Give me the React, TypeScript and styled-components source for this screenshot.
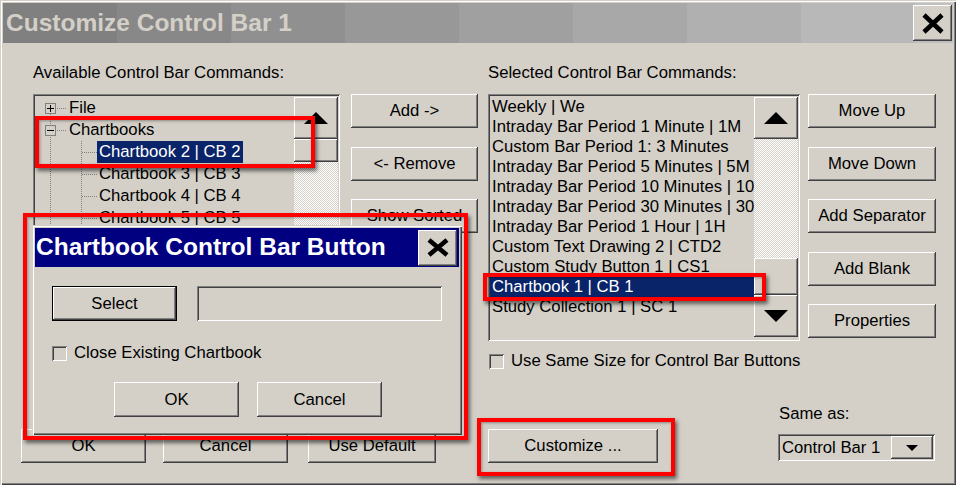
import React from "react";
import styled, { createGlobalStyle, css } from "styled-components";

const GlobalStyle = createGlobalStyle`
  html, body { margin: 0; padding: 0; background: #d4d0c8; }
  body {
    font-family: "Liberation Sans", Arial, sans-serif;
    font-size: 16.7px;
    color: #000;
    overflow: hidden;
  }
  * { box-sizing: border-box; }
`;

const FACE = "#d4d0c8";

const raised = css`
  box-shadow: inset -1px -1px #404040, inset 1px 1px #ffffff,
    inset -2px -2px #808080, inset 2px 2px ${FACE};
`;
const sunken = css`
  box-shadow: inset 1px 1px #808080, inset -1px -1px #ffffff,
    inset 2px 2px #404040, inset -2px -2px ${FACE};
`;
const frame = css`
  box-shadow: inset 1px 1px ${FACE}, inset 2px 2px #ffffff,
    inset -1px -1px #404040, inset -2px -2px #808080;
`;

const Window = styled.div`
  position: relative;
  width: 956px;
  height: 485px;
  padding: 3px 3px 0 3px;
  background: ${FACE};
  display: flex;
  flex-direction: column;
  ${frame}
`;

const TitleBar = styled.div<{ $active?: boolean }>`
  height: ${(p) => (p.$active ? 39 : 40)}px;
  flex: none;
  display: flex;
  align-items: center;
  justify-content: space-between;
  padding-left: ${(p) => (p.$active ? 1 : 3)}px;
  padding-right: ${(p) => (p.$active ? 2 : 1)}px;
  background: ${(p) =>
    p.$active
      ? "#000080"
      : `linear-gradient(to right,
        #808080 0 114px, #888888 114px 228px, #909090 228px 342px,
        #989898 342px 456px, #a0a0a0 456px 570px, #a8a8a8 570px 684px,
        #b0b0b0 684px 798px, #b8b8b8 798px 912px, #c0c0c0 912px)`};
`;

const TitleText = styled.span<{ $active?: boolean }>`
  font-weight: bold;
  font-size: 24.5px;
  line-height: 1;
  color: ${(p) => (p.$active ? "#ffffff" : FACE)};
  white-space: nowrap;
`;

const CloseButton = styled.button`
  width: 39px;
  height: 36px;
  padding: 0;
  border: none;
  background: ${FACE};
  display: flex;
  align-items: center;
  justify-content: center;
  ${raised}
`;

const Body = styled.div`
  flex: 1;
  display: flex;
  flex-direction: column;
  padding-top: 20px;
`;

const TopGrid = styled.div`
  display: grid;
  grid-template-columns: 318px 137px 320px 128px;
  grid-template-rows: 20px 258px auto;
  align-items: start;
  padding-left: 30px;
`;

const Label = styled.div<{ $col: string }>`
  grid-column: ${(p) => p.$col};
  grid-row: 1;
  line-height: 20px;
  white-space: nowrap;
`;

const TreeBox = styled.div`
  grid-column: 1;
  grid-row: 2 / span 2;
  margin-top: 11px;
  width: 307px;
  height: 300px;
  padding: 2px;
  display: flex;
  ${sunken}
`;

const TreeItems = styled.div`
  flex: 1;
  min-width: 0;
  overflow: hidden;
  padding-top: 1px;
`;

const TreeRow = styled.div`
  height: 22px;
  display: flex;
  align-items: stretch;
`;

const Guide = styled.div<{ $w: number; $x: number; $v: "none" | "full" | "down"; $h?: boolean }>`
  position: relative;
  flex: none;
  width: ${(p) => p.$w}px;
  &::before {
    content: "";
    display: ${(p) => (p.$v === "none" ? "none" : "block")};
    position: absolute;
    left: ${(p) => p.$x}px;
    top: ${(p) => (p.$v === "down" ? "11px" : "0")};
    bottom: 0;
    width: 1px;
    background-image: linear-gradient(to bottom, #808080 50%, transparent 50%);
    background-size: 1px 2px;
  }
  &::after {
    content: "";
    display: ${(p) => (p.$h ? "block" : "none")};
    position: absolute;
    left: ${(p) => p.$x + 1}px;
    right: 0;
    top: 11px;
    height: 1px;
    background-image: linear-gradient(to right, #808080 50%, transparent 50%);
    background-size: 2px 1px;
  }
`;

const Expander = styled.svg`
  position: absolute;
  left: 10px;
  top: 6px;
  z-index: 1;
`;

const ItemText = styled.span<{ $selected?: boolean }>`
  padding: 0 2px;
  line-height: 22px;
  white-space: nowrap;
  background: ${(p) => (p.$selected ? "#0a246a" : "transparent")};
  color: ${(p) => (p.$selected ? "#ffffff" : "#000")};
`;

const ScrollBar = styled.div<{ $pb?: number }>`
  flex: none;
  width: 44px;
  display: flex;
  flex-direction: column;
  padding: 1px 0 ${(p) => p.$pb ?? 0}px;
`;

const ScrollButton = styled.div`
  flex: none;
  height: 42px;
  background: ${FACE};
  display: flex;
  align-items: center;
  justify-content: center;
  ${raised}
`;

const Thumb = styled.div<{ $h: number }>`
  flex: none;
  height: ${(p) => p.$h}px;
  background: ${FACE};
  ${raised}
`;

const Track = styled.div`
  flex: 1;
  background-color: ${FACE};
  background-image: repeating-conic-gradient(#ffffff 0 25%, ${FACE} 0 50%);
  background-size: 2px 2px;
`;

const ButtonColumn = styled.div<{ $col: number }>`
  grid-column: ${(p) => p.$col};
  grid-row: 2;
  margin-top: 11px;
  display: flex;
  flex-direction: column;
  gap: 18.5px;
`;

const Button = styled.button<{ $w: number; $h?: number; $default?: boolean }>`
  width: ${(p) => p.$w}px;
  height: ${(p) => p.$h ?? 34}px;
  padding: 0;
  font: inherit;
  color: #000;
  background: ${FACE};
  white-space: nowrap;
  border: ${(p) => (p.$default ? "1px solid #000" : "none")};
  ${raised}
`;

const ListBox = styled.div`
  grid-column: 3;
  grid-row: 2;
  margin-top: 11px;
  width: 312px;
  height: 247px;
  padding: 2px;
  display: flex;
  ${sunken}
`;

const ListItems = styled.div`
  flex: 1;
  min-width: 0;
  overflow: hidden;
  padding-top: 1px;
`;

const ListRow = styled.div<{ $selected?: boolean }>`
  height: 20px;
  line-height: 20px;
  padding-left: 2px;
  white-space: nowrap;
  background: ${(p) => (p.$selected ? "#0a246a" : "transparent")};
  color: ${(p) => (p.$selected ? "#ffffff" : "#000")};
`;

const CheckRow = styled.label<{ $col?: string; $mt: number }>`
  ${(p) => (p.$col ? `grid-column: ${p.$col}; grid-row: 3;` : "")}
  align-self: start;
  margin-top: ${(p) => p.$mt}px;
  display: flex;
  align-items: center;
  gap: 7px;
  line-height: 20px;
  white-space: nowrap;
`;

const CheckBox = styled.span<{ $ml?: number }>`
  flex: none;
  width: 15px;
  height: 15px;
  margin-left: ${(p) => p.$ml ?? 0}px;
  background: ${FACE};
  ${sunken}
`;

const BottomBar = styled.div`
  margin-top: auto;
  margin-bottom: 22px;
  display: grid;
  grid-template-columns: 142px 145px 180px 290px 157px;
  align-items: end;
  padding-left: 18px;
`;

const SameAsGroup = styled.div`
  display: flex;
  flex-direction: column;
  margin-bottom: 2px;
`;

const SameAsLabel = styled.div`
  line-height: 20px;
  padding-left: 1px;
  margin-bottom: 10px;
`;

const Combo = styled.div`
  width: 157px;
  height: 27px;
  padding: 2px;
  display: flex;
  align-items: center;
  ${sunken}
`;

const ComboText = styled.span`
  flex: 1;
  padding-left: 2px;
  white-space: nowrap;
`;

const ComboButton = styled.div`
  width: 42px;
  height: 23px;
  background: ${FACE};
  display: flex;
  align-items: center;
  justify-content: center;
  ${raised}
`;

/* ---------- overlay dialog ---------- */

const Dialog = styled.div`
  position: absolute;
  left: 32px;
  top: 225px;
  width: 430px;
  height: 210px;
  padding: 3px;
  background: ${FACE};
  display: flex;
  flex-direction: column;
  z-index: 2;
  ${frame}
`;

const DialogContent = styled.div`
  display: flex;
  flex-direction: column;
  padding: 0 17px;
`;

const FieldRow = styled.div`
  margin-top: 19px;
  display: flex;
  gap: 20px;
`;

const TextField = styled.div`
  width: 245px;
  height: 35px;
  ${sunken}
`;

const DialogButtons = styled.div`
  margin-top: 19px;
  display: flex;
  justify-content: center;
  gap: 18px;
  padding-left: 2px;
`;

const Highlight = styled.div<{ $x: number; $y: number; $w: number; $h: number }>`
  position: absolute;
  left: ${(p) => p.$x}px;
  top: ${(p) => p.$y}px;
  width: ${(p) => p.$w}px;
  height: ${(p) => p.$h}px;
  border: 4px solid #ff0000;
  z-index: 3;
  pointer-events: none;
  box-shadow: 2px 3px 4px rgba(0, 0, 0, 0.55), inset 1px 1px 3px rgba(0, 0, 0, 0.35);
`;

/* ---------- icons ---------- */

const XIcon = ({ h = 21 }: { h?: number }) => (
  <svg width="22" height={h} viewBox={`0 0 22 ${h}`}>
    <path d={`M2 2 L20 ${h - 2} M20 2 L2 ${h - 2}`} stroke="#000" strokeWidth="4.6" />
  </svg>
);

const UpArrow = () => (
  <svg width="24" height="12" viewBox="0 0 24 12">
    <polygon points="12,0 24,12 0,12" fill="#000" />
  </svg>
);

const DownArrow = ({ w = 24, h = 12 }: { w?: number; h?: number }) => (
  <svg width={w} height={h} viewBox={`0 0 ${w} ${h}`}>
    <polygon points={`0,0 ${w},0 ${w / 2},${h}`} fill="#000" />
  </svg>
);

const ExpanderBox = ({ open }: { open: boolean }) => (
  <Expander width="11" height="11" viewBox="0 0 11 11" shapeRendering="crispEdges">
    <rect x="0.5" y="0.5" width="10" height="10" fill={FACE} stroke="#808080" />
    <path d="M2 5.5h7" stroke="#000" />
    {!open && <path d="M5.5 2v7" stroke="#000" />}
  </Expander>
);

/* ---------- data ---------- */

type TreeItem = {
  label: string;
  level: 0 | 1;
  expander?: "plus" | "minus";
  rootV?: "down" | "full";
  selected?: boolean;
};

const treeItems: TreeItem[] = [
  { label: "File", level: 0, expander: "plus", rootV: "down" },
  { label: "Chartbooks", level: 0, expander: "minus", rootV: "full" },
  { label: "Chartbook 2 | CB 2", level: 1, selected: true },
  { label: "Chartbook 3 | CB 3", level: 1 },
  { label: "Chartbook 4 | CB 4", level: 1 },
  { label: "Chartbook 5 | CB 5", level: 1 },
  { label: "Chartbook 6 | CB 6", level: 1 },
  { label: "Chartbook 7 | CB 7", level: 1 },
  { label: "Chartbook 8 | CB 8", level: 1 },
  { label: "Chartbook 9 | CB 9", level: 1 },
  { label: "Chartbook 10 | CB 10", level: 1 },
  { label: "Chartbook 11 | CB 11", level: 1 },
  { label: "Chartbook 12 | CB 12", level: 1 },
  { label: "Chartbook 13 | CB 13", level: 1 },
];

const listItems = [
  "Weekly | We",
  "Intraday Bar Period 1 Minute | 1M",
  "Custom Bar Period 1: 3 Minutes",
  "Intraday Bar Period 5 Minutes | 5M",
  "Intraday Bar Period 10 Minutes | 10M",
  "Intraday Bar Period 30 Minutes | 30M",
  "Intraday Bar Period 1 Hour | 1H",
  "Custom Text Drawing 2 | CTD2",
  "Custom Study Button 1 | CS1",
  "Chartbook 1 | CB 1",
  "Study Collection 1 | SC 1",
];

const rightButtons = ["Move Up", "Move Down", "Add Separator", "Add Blank", "Properties"];
const midButtons = ["Add ->", "<- Remove", "Show Sorted"];

export default function App() {
  return (
    <>
      <GlobalStyle />
      <Window>
        <TitleBar>
          <TitleText>Customize Control Bar 1</TitleText>
          <CloseButton aria-label="Close">
            <XIcon />
          </CloseButton>
        </TitleBar>

        <Body>
          <TopGrid>
            <Label $col="1 / span 2">Available Control Bar Commands:</Label>
            <Label $col="3 / span 2">Selected Control Bar Commands:</Label>

            <TreeBox>
              <TreeItems>
                {treeItems.map((it) => (
                  <TreeRow key={it.label}>
                    <Guide $w={32} $x={15} $v={it.level === 0 ? it.rootV ?? "full" : "full"} $h={it.level === 0}>
                      {it.expander && <ExpanderBox open={it.expander === "minus"} />}
                    </Guide>
                    {it.level === 1 && <Guide $w={30} $x={14} $v="full" $h />}
                    <ItemText $selected={it.selected}>{it.label}</ItemText>
                  </TreeRow>
                ))}
              </TreeItems>
              <ScrollBar>
                <ScrollButton>
                  <UpArrow />
                </ScrollButton>
                <Thumb $h={23} />
                <Track />
                <ScrollButton>
                  <DownArrow />
                </ScrollButton>
              </ScrollBar>
            </TreeBox>

            <ButtonColumn $col={2}>
              {midButtons.map((b) => (
                <Button key={b} $w={127}>
                  {b}
                </Button>
              ))}
            </ButtonColumn>

            <ListBox>
              <ListItems>
                {listItems.map((l) => (
                  <ListRow key={l} $selected={l === "Chartbook 1 | CB 1"}>
                    {l}
                  </ListRow>
                ))}
              </ListItems>
              <ScrollBar $pb={2}>
                <ScrollButton>
                  <UpArrow />
                </ScrollButton>
                <Track />
                <Thumb $h={37} />
                <ScrollButton>
                  <DownArrow />
                </ScrollButton>
              </ScrollBar>
            </ListBox>

            <ButtonColumn $col={4}>
              {rightButtons.map((b) => (
                <Button key={b} $w={128}>
                  {b}
                </Button>
              ))}
            </ButtonColumn>

            <CheckRow $col="3 / span 2" $mt={10}>
              <CheckBox $ml={1} />
              Use Same Size for Control Bar Buttons
            </CheckRow>
          </TopGrid>

          <BottomBar>
            <Button $w={125}>OK</Button>
            <Button $w={125}>Cancel</Button>
            <Button $w={128}>Use Default</Button>
            <Button $w={170}>Customize ...</Button>
            <SameAsGroup>
              <SameAsLabel>Same as:</SameAsLabel>
              <Combo>
                <ComboText>Control Bar 1</ComboText>
                <ComboButton>
                  <DownArrow w={12} h={6} />
                </ComboButton>
              </Combo>
            </SameAsGroup>
          </BottomBar>
        </Body>

        <Dialog>
          <TitleBar $active>
            <TitleText $active>Chartbook Control Bar Button</TitleText>
            <CloseButton aria-label="Close">
              <XIcon h={19} />
            </CloseButton>
          </TitleBar>
          <DialogContent>
            <FieldRow>
              <Button $w={125} $h={35} $default>
                Select
              </Button>
              <TextField />
            </FieldRow>
            <CheckRow $mt={22}>
              <CheckBox />
              Close Existing Chartbook
            </CheckRow>
            <DialogButtons>
              <Button $w={125} $h={35}>
                OK
              </Button>
              <Button $w={125} $h={35}>
                Cancel
              </Button>
            </DialogButtons>
          </DialogContent>
        </Dialog>

        <Highlight $x={35} $y={116} $w={280} $h={52} />
        <Highlight $x={23} $y={213} $w={445} $h={227} />
        <Highlight $x={483} $y={273} $w={283} $h={28} />
        <Highlight $x={477} $y={418} $w={198} $h={58} />
      </Window>
    </>
  );
}
